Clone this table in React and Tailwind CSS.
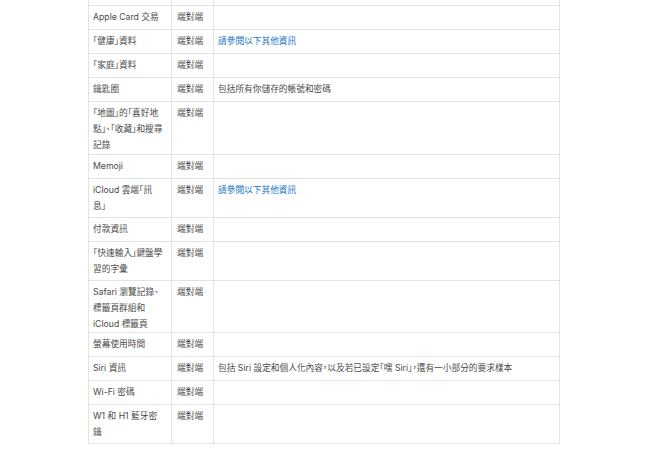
import React from "react";

const rows = [
  { h: "h-[24px]", a: ["Apple Card 交易"], c: null },
  { h: "h-[24px]", a: ["「健康」資料"], c: { link: true, text: "請參閱以下其他資訊" } },
  { h: "h-[24px]", a: ["「家庭」資料"], c: null },
  { h: "h-[24px]", a: ["鑰匙圈"], c: { text: "包括所有你儲存的帳號和密碼" } },
  { h: "h-[53px]", a: ["「地圖」的「喜好地", "點」、「收藏」和搜尋", "記錄"], c: null },
  { h: "h-[24px]", a: ["Memoji"], c: null },
  { h: "h-[39px]", a: ["iCloud 雲端「訊", "息」"], c: { link: true, text: "請參閱以下其他資訊" } },
  { h: "h-[24px]", a: ["付款資訊"], c: null },
  { h: "h-[39px]", a: ["「快速輸入」鍵盤學", "習的字彙"], c: null },
  { h: "h-[52px]", a: ["Safari 瀏覽記錄、", "標籤頁群組和", "iCloud 標籤頁"], c: null },
  { h: "h-[24px]", a: ["螢幕使用時間"], c: null },
  {
    h: "h-[24px]",
    a: ["Siri 資訊"],
    c: { text: "包括 Siri 設定和個人化內容，以及若已設定「嘿 Siri」，還有一小部分的要求樣本" },
  },
  { h: "h-[24px]", a: ["Wi-Fi 密碼"], c: null },
  { h: "h-[39px]", a: ["W1 和 H1 藍牙密", "鑰"], c: null },
];

const cell =
  "border-r border-b border-[#e3e3e3] pt-[3px] leading-[16px] whitespace-nowrap";

export default function App() {
  return (
    <div
      className="h-[453px] w-[646px] overflow-hidden bg-white text-[8.7px] text-[#4a4a4a] [font-feature-settings:'palt']"
      style={{ fontFamily: 'Inter, "Noto Sans CJK TC", sans-serif' }}
    >
      <div className="ml-[88px] w-[472px] border-l border-[#e3e3e3]">
        <div className="grid grid-cols-[83px_42px_346px]">
          <div className="h-[6px] border-r border-b border-[#e3e3e3]" />
          <div className="h-[6px] border-r border-b border-[#e3e3e3]" />
          <div className="h-[6px] border-r border-b border-[#e3e3e3]" />
        </div>
        {rows.map((r, i) => (
          <div key={i} className={`grid grid-cols-[83px_42px_346px] ${r.h}`}>
            <div className={`${cell} pl-[4px] pr-[3px]`}>
              {r.a.map((line, j) => (
                <div key={j}>{line}</div>
              ))}
            </div>
            <div className={`${cell} pl-[5px]`}>端對端</div>
            <div className={`${cell} pl-[4px]`}>
              {r.c ? (
                r.c.link ? (
                  <span className="text-[#1a73c4]">{r.c.text}</span>
                ) : (
                  r.c.text
                )
              ) : null}
            </div>
          </div>
        ))}
      </div>
    </div>
  );
}
